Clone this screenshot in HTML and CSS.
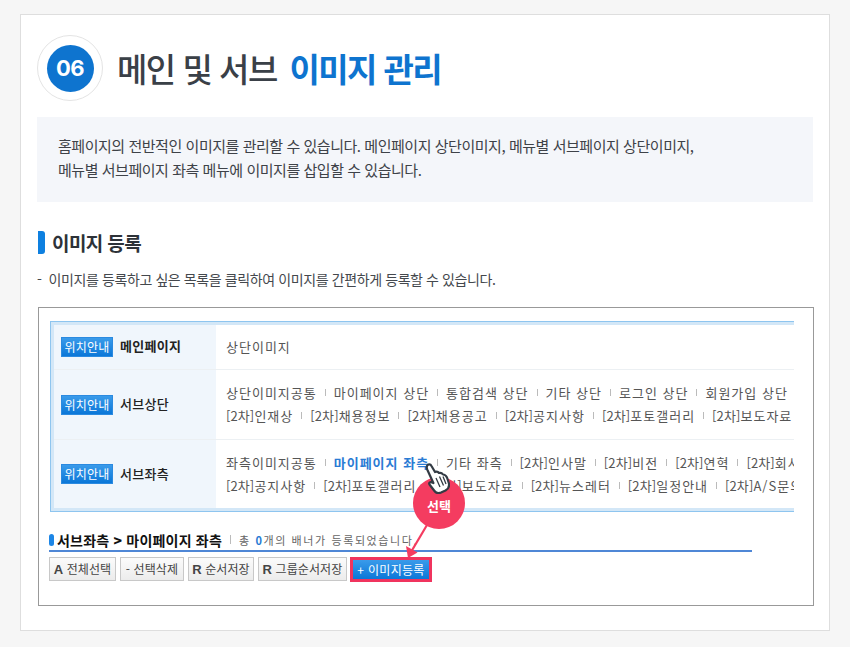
FILE: index.html
```html
<!DOCTYPE html>
<html lang="ko">
<head>
<meta charset="utf-8">
<title>메인 및 서브 이미지 관리</title>
<link rel="stylesheet" href="styles.css">
</head>
<body>
<main class="card">
  <header class="title-row">
    <div class="num-ring"><div class="num">06</div></div>
    <h1 class="title">메인 및 서브 <em>이미지 관리</em></h1>
  </header>
  <div class="intro">
    <p>홈페이지의 전반적인 이미지를 관리할 수 있습니다. 메인페이지 상단이미지, 메뉴별 서브페이지 상단이미지,</p>
    <p>메뉴별 서브페이지 좌측 메뉴에 이미지를 삽입할 수 있습니다.</p>
  </div>
  <h2 class="section"><span class="section-bar"></span>이미지 등록</h2>
  <p class="note">- &nbsp;이미지를 등록하고 싶은 목록을 클릭하여 이미지를 간편하게 등록할 수 있습니다.</p>

  <section class="shot">
    <div class="loc">
      <div class="loc-in">
        <div class="loc-row r1">
          <div class="loc-head"><span class="badge">위치안내</span><b class="strong">메인페이지</b></div>
          <div class="loc-body"><div class="line"><span>상단이미지</span></div></div>
        </div>
        <div class="loc-row r2">
          <div class="loc-head"><span class="badge">위치안내</span><b>서브상단</b></div>
          <div class="loc-body">
            <div class="line"><span>상단이미지공통</span><i></i><span>마이페이지 상단</span><i></i><span>통합검색 상단</span><i></i><span>기타 상단</span><i></i><span>로그인 상단</span><i></i><span>회원가입 상단</span></div>
            <div class="line"><span><u>[2차]</u>인재상</span><i></i><span><u>[2차]</u>채용정보</span><i></i><span><u>[2차]</u>채용공고</span><i></i><span><u>[2차]</u>공지사항</span><i></i><span><u>[2차]</u>포토갤러리</span><i></i><span><u>[2차]</u>보도자료</span></div>
          </div>
        </div>
        <div class="loc-row r3">
          <div class="loc-head"><span class="badge">위치안내</span><b>서브좌측</b></div>
          <div class="loc-body">
            <div class="line"><span>좌측이미지공통</span><i></i><span class="on">마이페이지 좌측</span><i></i><span>기타 좌측</span><i></i><span><u>[2차]</u>인사말</span><i></i><span><u>[2차]</u>비전</span><i></i><span><u>[2차]</u>연혁</span><i></i><span><u>[2차]</u>회사소개</span></div>
            <div class="line"><span><u>[2차]</u>공지사항</span><i></i><span><u>[2차]</u>포토갤러리</span><i></i><span><u>[2차]</u>보도자료</span><i></i><span><u>[2차]</u>뉴스레터</span><i></i><span><u>[2차]</u>일정안내</span><i></i><span><u>[2차]</u>A/S문의</span></div>
          </div>
        </div>
      </div>
    </div>

    <div class="crumb">
      <span class="crumb-bar"></span><strong>서브좌측 <span class="gt">&gt;</span> 마이페이지 좌측</strong><span class="pipe"></span><span class="count">총 <b>0</b>개의 배너가 등록되었습니다.</span>
    </div>
    <div class="btns">
      <button class="btn w-all"><b>A</b> 전체선택</button>
      <button class="btn w-del">- 선택삭제</button>
      <button class="btn w-ord"><b>R</b> 순서저장</button>
      <button class="btn w-grp"><b>R</b> 그룹순서저장</button>
      <button class="btn-add">+ 이미지등록</button>
    </div>

    <svg class="arrow" width="40" height="40" viewBox="0 0 40 40" aria-hidden="true">
      <path d="M27 4 L11 31" stroke="#f43c60" stroke-width="2.2" fill="none"/>
      <path d="M8 37 L6 25 L17.5 31.5 Z" fill="#f43c60"/>
    </svg>
    <div class="pick">선택</div>
    <svg class="hand" width="25" height="31" viewBox="0 0 25 31" aria-hidden="true">
      <path d="M2 3 C3 0.8 5.5 1 6.5 3 L10 9 C11.5 8.4 13 8.6 14 10 C15.5 9.6 17 10 18 11.5 C19.8 11.5 21 12.6 22 14.5 L23.8 20 C24.6 23 23 26 20.5 27.5 L16 29.6 C13.5 30.6 11 30 9.5 28 L4.5 21.5 C3.6 20 5 18.6 7 19.4 L8.4 20 L2.2 6.5 C1.8 5.4 1.6 4 2 3 Z" fill="#fff" stroke="#333b44" stroke-width="2.2" stroke-linejoin="round"/>
      <path d="M11 15 L15 24 M14.5 13.5 L18.5 22.5 M18 13.5 L21 21" stroke="#333b44" stroke-width="1.3" fill="none"/>
    </svg>
  </section>
</main>
</body>
</html>
```
FILE: styles.css
```css
* { box-sizing: border-box; }
html, body { margin: 0; height: 647px; overflow: hidden; }
body {
  background: #f6f6f6;
  padding: 14px 20px 0;
  font-family: "Noto Sans CJK KR", "Noto Sans", sans-serif;
  color: #333;
}
p, h1, h2 { margin: 0; }

.card {
  width: 810px;
  height: 617px;
  background: #fff;
  border: 1px solid #dedede;
  padding: 20px 16px 0;
}

.title-row { display: flex; align-items: center; gap: 14px; height: 66px; }
.num-ring {
  width: 66px; height: 66px;
  border-radius: 50%;
  border: 1px solid #e4e4e4;
  display: flex; align-items: center; justify-content: center;
  flex: none;
}
.num {
  width: 47px; height: 47px;
  border-radius: 50%;
  background: #0e74cf;
  color: #fff;
  font: 700 22px/47px "Inter", "Noto Sans", sans-serif;
  letter-spacing: -0.5px;
  text-align: center;
}
.title {
  font-size: 33px;
  font-weight: 500;
  letter-spacing: -1.5px;
  color: #3a4047;
  line-height: 66px;
  white-space: pre;
}
.title em { font-style: normal; color: #0e74cf; margin-left: 5px; font-weight: 700; letter-spacing: -1.6px; }

.intro {
  margin-top: 16px;
  height: 85px;
  background: #f4f6fa;
  padding: 17px 21px 0;
  font-size: 15px;
  line-height: 24px;
  letter-spacing: -0.46px;
  color: #3e4248;
  white-space: nowrap;
}

.section {
  margin: 29px 0 0 1px;
  display: flex; align-items: center; gap: 7px;
  height: 23px;
  font-size: 19px;
  font-weight: 700;
  letter-spacing: -0.6px;
  color: #2d3238;
}
.section-bar { width: 7px; height: 23px; background: #0e80e0; border-radius: 0 3px 3px 0; }

.note {
  margin: 13px 0 0 0;
  font-size: 14px;
  line-height: 24px;
  letter-spacing: -0.4px;
  color: #44484d;
  white-space: nowrap;
}

.shot {
  position: relative;
  margin: 16px 0 0 1px;
  width: 776px;
  height: 299px;
  border: 1px solid #999;
  padding: 13px 19px 0 11px;
}

.loc {
  height: 191px;
  border: solid #8ec5ef;
  border-width: 1px 0 1px 1px;
  overflow: hidden;
}
.loc-in {
  height: 189px;
  border: solid #d3e7f7;
  border-width: 3px 0 3px 3px;
  background: #fff;
}
.loc-row { display: flex; border-bottom: 1px solid #ecf0f3; }
.loc-row:last-child { border-bottom: 0; }
.r1 { height: 45px; }
.r2 { height: 70px; }
.r3 { height: 68px; }
.r1 .loc-body, .r2 .loc-body { padding-bottom: 2px; }
.loc-head {
  flex: none;
  width: 162px;
  background: #f0f6fc;
  display: flex; align-items: center; gap: 7px;
  padding-left: 7px;
  font-size: 13px;
  color: #222;
}
.loc-head b { font-weight: 500; letter-spacing: 0.3px; position: relative; top: -1px; }
.loc-head .strong { font-weight: 700; top: -2px; }
.badge {
  width: 52px; height: 20px;
  background: linear-gradient(#3a9bea, #0b77d8);
  border: 1px solid #2b8ae0;
  color: #fff;
  font-size: 12px;
  line-height: 17px;
  text-align: center;
  letter-spacing: 0.2px;
}
.loc-body {
  flex: 1;
  min-width: 0;
  padding-left: 10px;
  display: flex; flex-direction: column; justify-content: center;
  font-size: 13px;
  letter-spacing: 1px;
  color: #555;
}
.line { display: flex; align-items: center; height: 23px; white-space: nowrap; }
.line u { text-decoration: none; letter-spacing: 0.1px; }
.line i { flex: none; width: 1px; height: 7px; background: #bbb; margin: 0 8px; }
.line .on { color: #2a7bd4; font-weight: 700; }

.crumb {
  margin: 13px 0 0 -1px;
  width: 703px;
  height: 27px;
  border-bottom: 2px solid #4f87d6;
  display: flex; align-items: center;
  padding-top: 4px;
  white-space: nowrap;
}
.crumb-bar { width: 5px; height: 12px; background: #1d86e6; border-radius: 3px; margin-right: 3px; flex: none; }
.crumb strong { font-size: 14px; font-weight: 700; color: #111; letter-spacing: 0.2px; }
.gt { font-weight: 900; }
.pipe { width: 1px; height: 9px; background: #bbb; margin: 0 8px 0 8px; }
.count { font-size: 11px; letter-spacing: 1.6px; color: #666; }
.count b { color: #2a7bd4; }

.btns { display: flex; gap: 4px; margin: 5px 0 0 -1px; align-items: flex-start; }
.btn {
  height: 24px;
  padding: 0;
  background: linear-gradient(#fbfbfb, #ececec);
  border: 1px solid #c8c8c8;
  font: 400 12px/20px "Noto Sans CJK KR", sans-serif;
  letter-spacing: 0.1px;
  color: #444;
  white-space: nowrap;
}
.btn b { font-family: "Liberation Sans", sans-serif; font-size: 13px; color: #444; }
.w-all { width: 67px; }
.w-del { width: 64px; }
.w-ord { width: 66px; }
.w-grp { width: 89px; }
.btn-add {
  height: 25px;
  width: 82px;
  margin-left: -1px;
  padding: 0;
  background: linear-gradient(#3a9bea, #0b77d8);
  border: 3px solid #f0345e;
  color: #fff;
  font: 400 12px/18px "Noto Sans CJK KR", sans-serif;
  letter-spacing: 0.3px;
  white-space: nowrap;
}

.pick {
  position: absolute;
  left: 374px; top: 169px;
  width: 52px; height: 52px;
  border-radius: 50%;
  background: #f43c60;
  color: #fff;
  font-size: 13px;
  font-weight: 700;
  line-height: 58px;
  text-align: center;
}
.arrow { position: absolute; left: 361px; top: 213px; }
.hand { position: absolute; left: 386px; top: 155px; }
```
